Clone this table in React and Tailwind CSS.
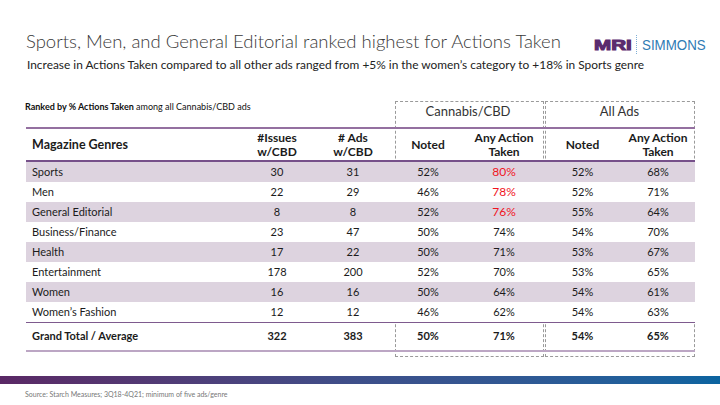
import React from 'react';

const ROWS = [
  { genre: 'Sports', issues: 30, ads: 31, noted: '52%', action: '80%', hot: true, allNoted: '52%', allAction: '68%' },
  { genre: 'Men', issues: 22, ads: 29, noted: '46%', action: '78%', hot: true, allNoted: '52%', allAction: '71%' },
  { genre: 'General Editorial', issues: 8, ads: 8, noted: '52%', action: '76%', hot: true, allNoted: '55%', allAction: '64%' },
  { genre: 'Business/Finance', issues: 23, ads: 47, noted: '50%', action: '74%', allNoted: '54%', allAction: '70%' },
  { genre: 'Health', issues: 17, ads: 22, noted: '50%', action: '71%', allNoted: '53%', allAction: '67%' },
  { genre: 'Entertainment', issues: 178, ads: 200, noted: '52%', action: '70%', allNoted: '53%', allAction: '65%' },
  { genre: 'Women', issues: 16, ads: 16, noted: '50%', action: '64%', allNoted: '54%', allAction: '61%' },
  { genre: 'Women\u2019s Fashion', issues: 12, ads: 12, noted: '46%', action: '62%', allNoted: '54%', allAction: '63%' },
];

const GRID = 'grid grid-cols-[214px_74px_78px_72px_80px_77px_74px]';

function Logo() {
  return (
    <div className="flex items-baseline mt-[2px]">
      <span className="w-[42px]">
        <span className="inline-block origin-left scale-x-[1.42] font-['Liberation_Sans',sans-serif] font-bold text-[14.5px] leading-none text-[#5b2a6e] [-webkit-text-stroke:1px_#5b2a6e]">
          MRI
        </span>
      </span>
      <span className="self-center mr-[5px] h-[19px] border-l border-dotted border-[#7fb0d6]" />
      <span className="w-[64px]">
        <span className="inline-block origin-left scale-x-[0.86] font-['Liberation_Sans',sans-serif] text-[15.5px] leading-none text-[#2f7bb4]">
          SIMMONS
        </span>
      </span>
    </div>
  );
}

export default function App() {
  return (
    <div className="relative w-[720px] h-[405px] overflow-hidden bg-white font-['Lato',sans-serif] text-[#1b1b1b]">
      {/* Title block */}
      <div className="flex h-[52px] items-start justify-between pl-[26px] pr-[14px] pt-[30px]">
        <h1 className="whitespace-nowrap text-[18.5px] leading-[22px] font-light text-[#3a3a3a]">
          Sports, Men, and General Editorial ranked highest for Actions Taken
        </h1>
        <Logo />
      </div>
      <p className="pl-[27px] mt-[6px] whitespace-nowrap text-[11.9px] leading-[14px] text-[#222]">
        Increase in Actions Taken compared to all other ads ranged from +5% in the women’s category to +18% in Sports genre
      </p>

      {/* Table */}
      <div className="relative ml-[26px] mt-[28px] w-[669px]">
        {/* dashed group boxes */}
        <div className="absolute left-[369px] top-[1px] w-[149px] h-[256px] border border-dashed border-[#9a9a9a]" />
        <div className="absolute left-[519px] top-[1px] w-[150px] h-[256px] border border-dashed border-[#9a9a9a]" />

        <div className={`${GRID} h-[27px] items-start`}>
          <div className="col-span-3 -ml-[1px] pt-[1px] text-[9px] leading-[11px] text-[#111]">
            <span className="font-bold">Ranked by % Actions Taken</span> among all Cannabis/CBD ads
          </div>
          <div className="col-span-2 pt-[3px] text-center text-[13px] leading-[16px] text-[#333]">Cannabis/CBD</div>
          <div className="col-span-2 pt-[3px] text-center text-[13px] leading-[16px] text-[#333]">All Ads</div>
        </div>

        <div className={`${GRID} relative h-[35px] items-center border-t-2 border-b-2 border-t-[#9470a0] border-b-[#76508a] text-[12px] leading-[14px] font-bold`}>
          <div className="pl-[6px] text-[12.5px]">Magazine Genres</div>
          <div className="text-center">#Issues<br />w/CBD</div>
          <div className="text-center">#&nbsp;Ads<br />w/CBD</div>
          <div className="text-center">Noted</div>
          <div className="text-center">Any Action<br />Taken</div>
          <div className="text-center">Noted</div>
          <div className="text-center">Any Action<br />Taken</div>
        </div>

        {ROWS.map((r, i) => (
          <div
            key={r.genre}
            className={`${GRID} relative h-[20px] items-center text-[11px] ${i % 2 === 0 ? 'bg-[#ddd3df]' : 'bg-white'}`}
          >
            <div className="pl-[6px]">{r.genre}</div>
            <div className="text-center">{r.issues}</div>
            <div className="text-center">{r.ads}</div>
            <div className="text-center">{r.noted}</div>
            <div className={`text-center ${r.hot ? 'text-[#f0141e] text-[12px]' : ''}`}>{r.action}</div>
            <div className="text-center">{r.allNoted}</div>
            <div className="text-center">{r.allAction}</div>
          </div>
        ))}

        <div className={`${GRID} relative h-[30px] items-center border-t-[1.5px] border-b-2 border-t-[#7e5a8e] border-b-[#bca6c4] text-[11px] font-bold`}>
          <div className="pl-[6px]">Grand Total / Average</div>
          <div className="text-center">322</div>
          <div className="text-center">383</div>
          <div className="text-center">50%</div>
          <div className="text-center">71%</div>
          <div className="text-center">54%</div>
          <div className="text-center">65%</div>
        </div>
      </div>

      {/* Footer */}
      <div className="absolute left-0 right-0 top-[376px] h-[8px] bg-gradient-to-r from-[#5a2865] via-[#3d4f8a] to-[#0a64a0]" />
      <div className="absolute left-[25px] top-[389px] text-[7px] leading-[10px] text-[#777]">
        Source: Starch Measures; 3Q18-4Q21; minimum of five ads/genre
      </div>
    </div>
  );
}
